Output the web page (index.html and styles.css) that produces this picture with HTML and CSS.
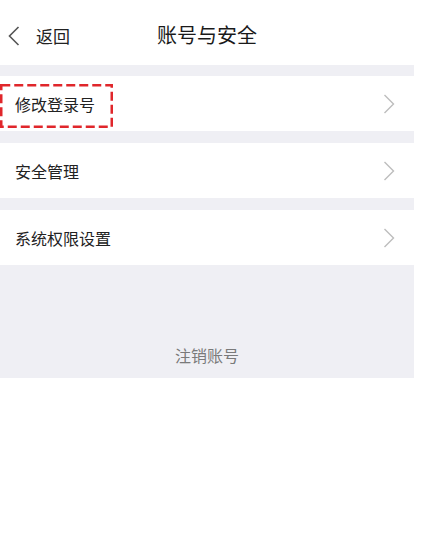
FILE: index.html
```html
<!DOCTYPE html>
<html lang="zh-CN">
<head>
<meta charset="utf-8">
<title>账号与安全</title>
<link rel="stylesheet" href="styles.css">
</head>
<body>
<div class="page">
  <header class="nav">
    <div class="back">
      <svg class="back-icon" width="12" height="20" viewBox="0 0 12 20"><polyline points="10.5,1 1.5,10 10.5,19" fill="none" stroke="#555" stroke-width="1.6"/></svg>
      <span class="back-text">返回</span>
    </div>
    <h1 class="title">账号与安全</h1>
  </header>
  <div class="list">
    <div class="row first">
      <span class="label">修改登录号</span>
      <svg class="chev" width="12" height="20" viewBox="0 0 12 20"><polyline points="1.5,1 10.5,10 1.5,19" fill="none" stroke="#bdbdbd" stroke-width="1.4"/></svg>
      <svg class="mark" width="113" height="44" viewBox="0 0 113 44"><rect x="1.25" y="1.25" width="110.5" height="41.5" fill="none" stroke="#e0262b" stroke-width="2.5" stroke-dasharray="9 4"/></svg>
    </div>
    <div class="row">
      <span class="label">安全管理</span>
      <svg class="chev" width="12" height="20" viewBox="0 0 12 20"><polyline points="1.5,1 10.5,10 1.5,19" fill="none" stroke="#bdbdbd" stroke-width="1.4"/></svg>
    </div>
    <div class="row">
      <span class="label">系统权限设置</span>
      <svg class="chev" width="12" height="20" viewBox="0 0 12 20"><polyline points="1.5,1 10.5,10 1.5,19" fill="none" stroke="#bdbdbd" stroke-width="1.4"/></svg>
    </div>
    <div class="footer">
      <span class="cancel">注销账号</span>
    </div>
  </div>
</div>
</body>
</html>
```
FILE: styles.css
```css
* { box-sizing: border-box; }
html, body { margin: 0; padding: 0; background: #fff; }
body {
  font-family: "Noto Sans CJK SC", "Noto Sans", sans-serif;
  color: #222;
}
.page { width: 414px; }
.nav {
  height: 65px;
  position: relative;
  display: flex;
  align-items: center;
  justify-content: center;
  background: #fff;
}
.back {
  position: absolute;
  left: 8px;
  top: 0;
  height: 65px;
  display: flex;
  align-items: center;
  gap: 16px;
  padding-top: 6px;
}
.back-text { font-size: 17px; line-height: 20px; color: #222; }
.title {
  margin: 0;
  font-size: 20px;
  font-weight: 400;
  line-height: 24px;
  padding-top: 5px;
  color: #1a1a1a;
}
.list { background: #efeff4; padding-top: 11px; }
.row {
  position: relative;
  height: 55px;
  margin-top: 12px;
  background: #fff;
  display: flex;
  align-items: center;
  justify-content: space-between;
  padding: 0 19px 0 15px;
}
.row.first { margin-top: 0; }
.label { font-size: 16px; line-height: 22px; color: #222; }
.chev { display: block; }
.mark { position: absolute; left: 0; top: 8px; }
.footer {
  height: 113px;
  display: flex;
  align-items: flex-end;
  justify-content: center;
  padding-bottom: 12px;
}
.cancel { font-size: 16px; line-height: 22px; color: #7a7a7a; }
```
